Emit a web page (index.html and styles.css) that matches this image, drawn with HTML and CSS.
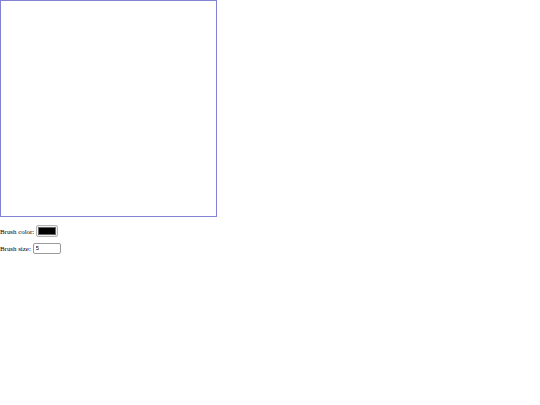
FILE: index.html
```html
<!DOCTYPE html>
<html lang="en">
<head>
    <meta charset="UTF-8">
    <title>Paint</title>
    <link rel="stylesheet" href="styles.css">
</head>
<body>

<canvas id="board" width="215" height="215"></canvas>

<div class="controls">
    <label class="row">Brush color: <input type="color" id="brushColor" value="#000000"></label>
    <label class="row">Brush size: <input type="number" id="brushSize" value="5" min="1" max="50"></label>
</div>

<script>
    const canvas = document.getElementById("board");
    const ctx = canvas.getContext("2d");
    let drawing = false;

    canvas.addEventListener("mousedown", function (e) {
        drawing = true;
        ctx.beginPath();
        ctx.moveTo(e.offsetX, e.offsetY);
    });

    canvas.addEventListener("mousemove", function (e) {
        if (!drawing) return;
        ctx.strokeStyle = document.getElementById("brushColor").value;
        ctx.lineWidth = document.getElementById("brushSize").value;
        ctx.lineCap = "round";
        ctx.lineTo(e.offsetX, e.offsetY);
        ctx.stroke();
    });

    window.addEventListener("mouseup", function () {
        drawing = false;
    });
</script>

</body>
</html>
```

FILE: styles.css
```css
body {
    margin: 0;
    font-family: "Liberation Serif", "Times New Roman", serif;
    font-size: 6.9px;
    color: #000;
}
#board {
    display: block;
    border: 1px solid #8282d4;
}
.controls {
    padding-top: 8px;
}
.row {
    display: flex;
    align-items: center;
    gap: 2px;
    height: 12px;
    margin-bottom: 5px;
}
#brushColor {
    width: 22px;
    height: 12px;
    box-sizing: border-box;
    padding: 1px;
    margin: 0;
    border: 1px solid #b5b5b5;
    border-radius: 2px;
    background: #efefef;
}
#brushColor::-webkit-color-swatch-wrapper {
    padding: 0;
}
#brushColor::-webkit-color-swatch {
    border: 1px solid #666;
}
#brushSize {
    width: 28px;
    height: 11px;
    box-sizing: border-box;
    padding: 0 2px;
    margin: 0;
    border: 1px solid #9a9a9a;
    border-radius: 2px;
    font-family: "Liberation Sans", Arial, sans-serif;
    font-size: 5.8px;
}
```
